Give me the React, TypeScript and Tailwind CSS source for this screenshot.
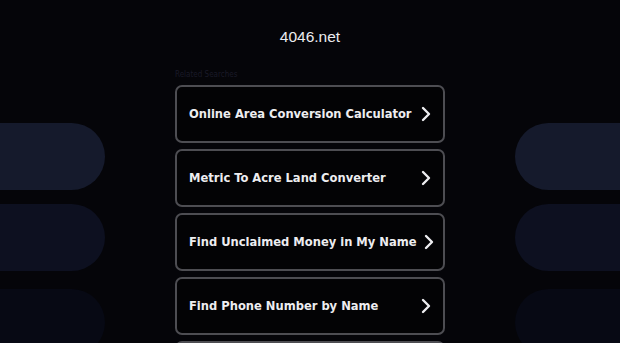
import React from 'react';
import { ChevronRight } from 'lucide-react';

const links = [
  'Online Area Conversion Calculator',
  'Metric To Acre Land Converter',
  'Find Unclaimed Money in My Name',
  'Find Phone Number by Name',
];

const pills = [
  { color: 'bg-[#151a2c]', gap: 'mt-0' },
  { color: 'bg-[#0d1020]', gap: 'mt-[14px]' },
  { color: 'bg-[#070914]', gap: 'mt-[18px]' },
];

export default function App() {
  return (
    <div className="h-[343px] w-[620px] overflow-hidden bg-[#050509] font-['DejaVu_Sans_Condensed','DejaVu_Sans',sans-serif]">
      <div className="pt-[27px] text-center font-['Liberation_Sans',Arial,sans-serif] text-[15.5px] font-medium leading-[20px] text-[#ececf0]">
        4046.net
      </div>

      <div className="mt-[18px] flex justify-between">
        {/* left decorative pills */}
        <div className="flex w-[105px] flex-col pt-[58px]">
          {pills.map((p, i) => (
            <div key={i} className={`h-[67px] w-full shrink-0 rounded-r-full ${p.color} ${p.gap}`} />
          ))}
        </div>

        <div className="w-[270px]">
          <div className="h-[20px] text-[8px] leading-[20px] text-[#1a1a28]">Related Searches</div>
          <div className="flex flex-col gap-[6px]">
            {links.map((l) => (
              <div
                key={l}
                className="flex h-[58px] shrink-0 items-center justify-between rounded-[7px] border-2 border-[#4d4d52] bg-[#030305] pl-[12px] pr-[5px]"
              >
                <span className="whitespace-nowrap text-[12.8px] font-bold text-[#ededf0]">{l}</span>
                <ChevronRight size={24} strokeWidth={2.4} className="shrink-0 text-[#ededf0]" />
              </div>
            ))}
            {/* next result, below the fold */}
            <div className="h-[58px] shrink-0 rounded-[7px] border-2 border-[#4d4d52] bg-[#030305]" />
          </div>
        </div>

        {/* right decorative pills */}
        <div className="flex w-[105px] flex-col pt-[58px]">
          {pills.map((p, i) => (
            <div key={i} className={`h-[67px] w-full shrink-0 rounded-l-full ${p.color} ${p.gap}`} />
          ))}
        </div>
      </div>
    </div>
  );
}
